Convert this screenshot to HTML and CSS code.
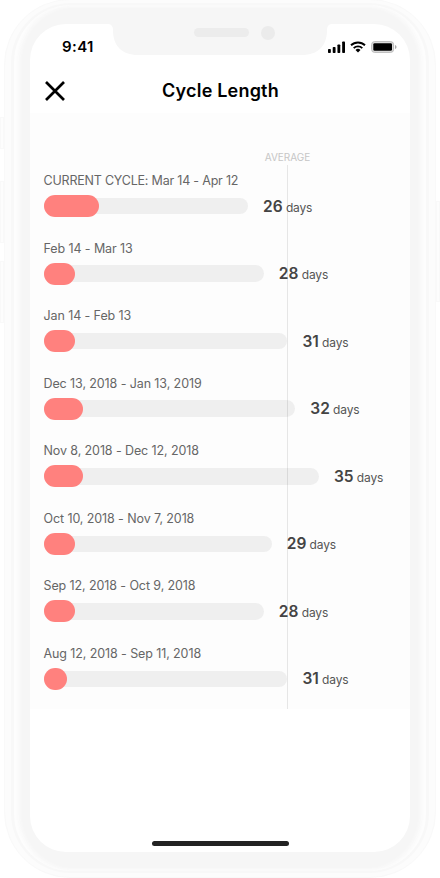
FILE: index.html
```html
<!DOCTYPE html>
<html lang="en">
<head>
  <meta charset="UTF-8">
  <meta name="viewport" content="width=device-width, initial-scale=1.0">
  <title>Cycle Length</title>
  <link rel="stylesheet" href="styles.css">
</head>
<body>
  <!-- side buttons -->
  <span class="side-button mute"></span>
  <span class="side-button volume-up"></span>
  <span class="side-button volume-down"></span>
  <span class="side-button power"></span>

  <div class="phone">
    <div class="rim">
      <div class="bezel">
        <div class="screen">
          <div class="status-bar">
            <span class="time">9:41</span>
            <div class="status-icons">
              <svg class="signal" width="17" height="12" viewBox="0 0 18 12" preserveAspectRatio="none">
                <rect x="0" y="8" width="3" height="4" rx="0.8"/>
                <rect x="5" y="6" width="3" height="6" rx="0.8"/>
                <rect x="10" y="3.5" width="3" height="8.5" rx="0.8"/>
                <rect x="15" y="0.5" width="3" height="11.5" rx="0.8"/>
              </svg>
              <svg class="wifi" width="16" height="12" viewBox="0 0 16 12">
                <path d="M1 4.3a10 10 0 0 1 14 0M3.7 7.1a6.2 6.2 0 0 1 8.6 0" fill="none" stroke="#000" stroke-width="1.9"/>
                <path d="M5.5 9a3.7 3.7 0 0 1 5 0L8 11.6z"/>
              </svg>
              <svg class="battery" width="26" height="12" viewBox="0 0 26 12">
                <rect x="0.6" y="0.6" width="22" height="10.8" rx="3" fill="#ddd" stroke="#bbb"/>
                <rect x="2.3" y="2.2" width="18.7" height="7.6" rx="1.4"/>
                <path d="M24 4v4q1.6-.6 1.6-2T24 4z" fill="#aaa"/>
              </svg>
            </div>
          </div>

          <div class="header">
            <button class="close" aria-label="Close">
              <svg width="20" height="20" viewBox="0 0 20 20">
                <path d="M1 1l18 18M19 1L1 19" fill="none" stroke="#000" stroke-width="2.7"/>
              </svg>
            </button>
            <h1>Cycle Length</h1>
          </div>

          <div class="chart">
            <div class="average"><span>AVERAGE</span></div>
            <ul class="cycle-list" id="cycleList"></ul>
          </div>

          <div class="home-indicator"></div>
        </div>
        <div class="notch">
          <svg width="222" height="32" viewBox="0 0 222 32">
            <path d="M0 0H222Q218 1 218 6C218 22 209 31 193 31H29C13 31 4 22 4 6Q4 1 0 0z" fill="#f6f6f6"/>
          </svg>
          <span class="speaker"></span>
          <span class="camera"></span>
        </div>
      </div>
    </div>
  </div>

  <script>
    const cycles = [
      { label: "CURRENT CYCLE: Mar 14 - Apr 12", days: 26, period: 7, current: true },
      { label: "Feb 14 - Mar 13", days: 28, period: 4 },
      { label: "Jan 14 - Feb 13", days: 31, period: 4 },
      { label: "Dec 13, 2018 - Jan 13, 2019", days: 32, period: 5 },
      { label: "Nov 8, 2018 - Dec 12, 2018", days: 35, period: 5 },
      { label: "Oct 10, 2018 - Nov 7, 2018", days: 29, period: 4 },
      { label: "Sep 12, 2018 - Oct 9, 2018", days: 28, period: 4 },
      { label: "Aug 12, 2018 - Sep 11, 2018", days: 31, period: 3 }
    ];
    const dayWidth = 7.87;

    document.getElementById("cycleList").innerHTML = cycles.map(c => `
      <li class="cycle${c.current ? " current" : ""}">
        <div class="label">${c.label}</div>
        <div class="row">
          <div class="track" style="width: ${c.days * dayWidth}px">
            <div class="period" style="width: ${c.period * dayWidth}px"></div>
          </div>
          <div class="days"><b>${c.days}</b> days</div>
        </div>
      </li>`).join("");
  </script>
</body>
</html>
```

FILE: styles.css
```css
* {
  box-sizing: border-box;
}
body {
  margin: 0;
  height: 878px;
  overflow: hidden;
  position: relative;
  background: #fff;
  font-family: Inter, "Liberation Sans", sans-serif;
  color: #000;
}
.phone {
  width: 432px;
  height: 879px;
  margin: -1px 0 0 4px;
  padding: 3px 6px 4px;
  border-radius: 66px;
  background: #fcfcfc;
  border: 1px solid #f9f9f9;
}
.rim {
  height: 100%;
  padding: 2px 3px;
  border-radius: 60px;
  background: #f8f8f8;
}
.bezel {
  position: relative;
  height: 100%;
  padding: 19px 16px 18px;
  border-radius: 57px;
  background: #f6f6f6;
  box-shadow: inset 5px 0 4px #fdfdfd, inset -5px 0 4px #fdfdfd;
}
.screen {
  display: flex;
  flex-direction: column;
  height: 828px;
  border-radius: 36px;
  background: #fff;
  overflow: hidden;
}

/* hardware */
.notch {
  position: absolute;
  top: 19px;
  left: 95px;
  width: 222px;
  height: 32px;
}
.notch svg {
  display: block;
}
.speaker {
  position: absolute;
  top: 4px;
  left: 85px;
  width: 55px;
  height: 9px;
  border-radius: 5px;
  background: #ececec;
}
.camera {
  position: absolute;
  top: 2px;
  left: 152px;
  width: 14px;
  height: 14px;
  border-radius: 50%;
  background: #ebebeb;
}
.side-button {
  position: absolute;
  left: 0;
  width: 4px;
  border: 1px solid #f9f9f9;
  background: #fdfdfd;
}
.mute {
  top: 117px;
  height: 32px;
}
.volume-up {
  top: 181px;
  height: 62px;
}
.volume-down {
  top: 261px;
  height: 62px;
}
.power {
  left: 436px;
  top: 201px;
  height: 101px;
}

/* status bar and title */
.status-bar {
  display: flex;
  justify-content: space-between;
  align-items: center;
  height: 45px;
  padding: 0 13px 0 32px;
}
.time {
  font-size: 15px;
  font-weight: 600;
  letter-spacing: 0.4px;
}
.status-icons {
  display: flex;
  align-items: center;
  gap: 5px;
}
.header {
  display: flex;
  align-items: center;
  height: 44px;
  padding: 0 15px;
}
.close {
  display: flex;
  width: 20px;
  padding: 0;
  border: 0;
  background: none;
}
h1 {
  flex: 1;
  margin: 0 19px 0 0;
  text-align: center;
  font-size: 18px;
  font-weight: 600;
  line-height: 22px;
  letter-spacing: 0.2px;
}

/* chart */
.chart {
  position: relative;
  height: 596px;
  padding: 59px 0 0 13.5px;
  background: #fdfdfd;
}
.average {
  position: absolute;
  top: 38px;
  left: 257px;
  bottom: 0;
  width: 1px;
  z-index: 1;
  display: flex;
  flex-direction: column;
  align-items: center;
  font-size: 10px;
  line-height: 13px;
  color: #c6c6c6;
}
.average::after {
  content: "";
  flex: 1;
  width: 1px;
  margin-top: 1px;
  background: rgba(0, 0, 0, 0.09);
}
.cycle-list {
  list-style: none;
  margin: 0;
  padding: 0;
}
.cycle {
  height: 67.57px;
}
.label {
  height: 23px;
  font-size: 12.5px;
  line-height: 17px;
  letter-spacing: -0.1px;
  color: #666;
}
.current .label {
  letter-spacing: -0.2px;
}
.row {
  display: flex;
  align-items: center;
  gap: 15px;
  height: 22px;
}
.track {
  display: flex;
  align-items: center;
  height: 16.5px;
  border-radius: 9px;
  background: #efefef;
}
.period {
  height: 22px;
  border-radius: 11px;
  background: #ff817e;
}
.days {
  padding-top: 2px;
  font-size: 12px;
  line-height: 22px;
  letter-spacing: -0.15px;
  color: #555;
}
.days b {
  font-size: 15.5px;
  font-weight: 600;
  letter-spacing: 0;
  color: #444;
}
.home-indicator {
  width: 137px;
  height: 5px;
  margin: auto auto 6px 122px;
  border-radius: 3px;
  background: #222;
}
```
